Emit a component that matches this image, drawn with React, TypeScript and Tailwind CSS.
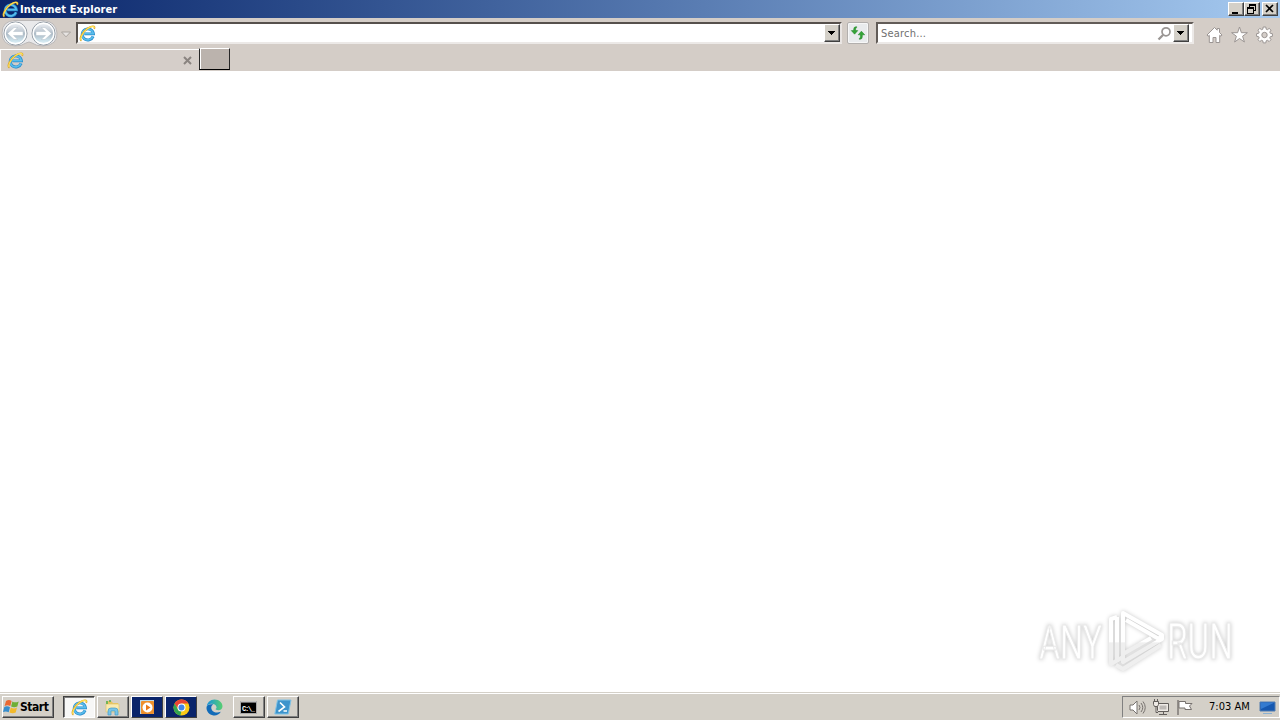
import React from 'react';

const raised = 'border border-t-white border-l-white border-r-[#404040] border-b-[#404040] bg-[#d4d0c8] shadow-[inset_-1px_-1px_0_#808080]';

function IeIcon({ size = 16 }: { size?: number }) {
  return (
    <svg width={size} height={size} viewBox="0 0 16 16" fill="none" className="shrink-0">
      <path d="M13.3 10.7A5.3 5.2 0 1 1 13.6 8.3H5" stroke="#2588c9" strokeWidth="2.7" />
      <path d="M13.2 10.7A5.3 5.2 0 1 1 13.5 8.1H5" stroke="#58bdec" strokeWidth="1.6" />
      <path d="M2.3 14.8C-.4 13.5 2.7 6.9 8 3.3 12 .6 15.8 .2 14.3 3.6" stroke="#d9a52c" strokeWidth="1.6" />
      <path d="M2.1 14.2C.6 13 3.4 6.7 8.2 3.2 12 .6 15 .7 14.2 3" stroke="#ffe052" strokeWidth="1.1" />
    </svg>
  );
}

function NavButtons() {
  return (
    <svg width="58" height="30" viewBox="0 0 58 30" className="shrink-0">
      <defs>
        <linearGradient id="orb" x1="0" y1="0" x2="0" y2="1">
          <stop offset="0" stopColor="#f3f5f8" />
          <stop offset=".3" stopColor="#cfd6de" />
          <stop offset=".52" stopColor="#adbac6" />
          <stop offset=".8" stopColor="#cce2eb" />
          <stop offset="1" stopColor="#effaff" />
        </linearGradient>
      </defs>
      <path d="M15 2.5H43Q56 3 57 15T43 28Q36 28 32 25 29 23 26 25 22 28 15 28 2 27 2 15T15 2.5Z" fill="#e9e9eb" stroke="#bbb8b8" />
      {[15.5, 43.5].map((cx) => (
        <g key={cx}>
          <circle cx={cx} cy="15.5" r="11.5" fill="url(#orb)" stroke="#8c959f" />
          <circle cx={cx} cy="15.5" r="10.3" fill="none" stroke="#fff" strokeWidth="1.4" />
        </g>
      ))}
      <path d="M7.5 15.5 14 9.5H17.8L13.5 13.5H23V17.5H13.5L17.8 21.5H14Z" fill="#fff" stroke="#b5c0cb" strokeWidth=".5" />
      <path d="M51.5 15.5 45 9.5H41.2L45.5 13.5H36V17.5H45.5L41.2 21.5H45Z" fill="#fff" stroke="#b5c0cb" strokeWidth=".5" />
    </svg>
  );
}

function DropButton() {
  return (
    <div className={`flex h-[18px] w-4 shrink-0 items-center justify-center ${raised}`}>
      <svg width="8" height="4" viewBox="0 0 8 4" shapeRendering="crispEdges"><path d="M0 0H7V1H6V2H5V3H4V4H3V3H2V2H1V1H0Z" /></svg>
    </div>
  );
}

function TitleBar() {
  return (
    <div className="flex h-[18px] items-center bg-linear-to-r from-[#0a246a] to-[#a6caf0] pl-0.5 pr-0.5">
      <IeIcon size={17} />
      <span className="mt-px ml-px whitespace-nowrap font-['DejaVu_Sans_Condensed','DejaVu_Sans',sans-serif] text-[11px] leading-[18px] font-bold tracking-[0.08px] text-white [font-stretch:condensed]">Internet Explorer</span>
      <div className="ml-auto flex">
        <div className={`h-[14px] w-4 ${raised}`}>
          <svg width="14" height="12" shapeRendering="crispEdges"><path d="M3 9H9V11H3Z" /></svg>
        </div>
        <div className={`h-[14px] w-4 ${raised}`}>
          <svg width="14" height="12" fill="none" stroke="#000" shapeRendering="crispEdges">
            <path d="M4.5 4V1.5H10.5V7.5H8M4 2.5H11M2.5 4.5H8.5V10.5H2.5ZM2 5.5H9" />
          </svg>
        </div>
        <div className={`ml-0.5 h-[14px] w-4 ${raised}`}>
          <svg width="14" height="12" fill="none" stroke="#000" strokeWidth="1.7"><path d="M3 2 10 9M10 2 3 9" /></svg>
        </div>
      </div>
    </div>
  );
}

function Toolbar() {
  return (
    <div className="flex h-[30px] items-start">
      <NavButtons />
      <svg width="10" height="7" viewBox="0 0 10 7" className="mt-[13px] ml-[3px] shrink-0"><path d="M.5 1H9.5L5 5.8Z" fill="#e7e4e2" stroke="#aaa49f" /></svg>
      <div className="mt-1 ml-[5px] flex h-[22px] w-[766px] items-center border-2 border-t-[#56504c] border-l-[#56504c] border-r-[#e8e4e2] border-b-[#ece9e7] bg-white pl-px">
        <IeIcon size={17} />
        <div className="ml-auto"><DropButton /></div>
      </div>
      <div className="mt-1 ml-[5px] flex h-[22px] w-[22px] items-center justify-center rounded-[2px] border border-[#b2afad] bg-[#e9ebed] shadow-[inset_0_0_0_1px_#f7f7f7]">
        <svg width="16" height="16" viewBox="0 0 16 16" fill="#34a536" stroke="#187f20" strokeWidth=".5">
          <path d="M6.8 1.8H5.7Q3.6 2 3.7 4.2V5.6H1.3L4.6 9.2 7.8 5.6H5.6V4.2Q5.6 2.8 6.8 2.3Z" />
          <path d="M9.2 14.2H10.3Q12.4 14 12.3 11.8V9.8H14.7L11.4 6.2 8.2 9.8H10.4V11.8Q10.4 13.2 9.2 13.7Z" />
        </svg>
      </div>
      <div className="mt-1 ml-[7px] flex h-[22px] w-[318px] items-center border-2 border-t-[#625c58] border-l-[#625c58] border-r-[#ece9e7] border-b-[#ece9e7] bg-white pr-[3px] pl-[3px]">
        <span className="mt-0.5 font-['DejaVu_Sans_Condensed','DejaVu_Sans',sans-serif] text-[11px] tracking-[0.2px] text-[#707070] [font-stretch:condensed]">Search...</span>
        <svg width="15" height="15" viewBox="0 0 15 15" fill="none" stroke="#999593" className="ml-auto mr-px">
          <circle cx="9" cy="5.8" r="4" strokeWidth="1.7" />
          <path d="M6 9 1.5 13.5" strokeWidth="2.3" />
        </svg>
        <DropButton />
      </div>
      <div className="mt-2 ml-3 flex gap-[7.5px]">
        <svg width="17" height="18" viewBox="0 0 17 18" fill="#fff" stroke="#9b9593">
          <path d="M8.5 1.5 1 9 2.1 10.3 3.3 9.3V16.5H7V11.5H10V16.5H13.7V9.3L15 10.3 16 9 13.5 6.5V2.5H11.2V4.2Z" />
        </svg>
        <svg width="17" height="18" viewBox="0 0 17 18" fill="#fff" stroke="#9b9593">
          <path d="M8.5 1 10.4 6.7H16.4L11.6 10.2 13.4 16 8.5 12.5 3.6 16 5.4 10.2.6 6.7H6.6Z" />
        </svg>
        <svg width="17" height="18" viewBox="0 0 17 18" className="ml-[0.5px]">
          <g fill="#fff" stroke="#9b9593">
            <path d="M7.2 1H9.8L10.2 3.2 11.4 3.7 13.2 2.4 15 4.2 13.8 6.1 14.3 7.3 16.4 7.7V10.3L14.3 10.7 13.8 11.9 15 13.7 13.2 15.5 11.4 14.3 10.2 14.8 9.8 16.9H7.2L6.8 14.8 5.6 14.3 3.8 15.5 2 13.7 3.2 11.9 2.7 10.7.6 10.3V7.7L2.7 7.3 3.2 6.1 2 4.2 3.8 2.4 5.6 3.7 6.8 3.2Z" />
            <circle cx="8.5" cy="9" r="2.7" fill="#d4cec9" />
          </g>
        </svg>
      </div>
    </div>
  );
}

function TabBar() {
  return (
    <div className="flex h-[23px] items-start bg-[#d4cdc7]">
      <div className="mt-px flex h-[22px] w-[199px] items-center border-t border-l border-white bg-[#d5cec9] pr-[7px] pb-px pl-[6px]">
        <IeIcon size={17} />
        <svg width="9" height="9" viewBox="0 0 9 9" className="ml-auto" stroke="#8a8480" strokeWidth="2"><path d="M1 1 8 8M8 1 1 8" /></svg>
      </div>
      <div className="h-[22px] w-[31px] border border-t-white border-l-[#262626] border-r-[#262626] border-b-black bg-[#bbb3ad] shadow-[inset_1px_0_0_#fff]" />
    </div>
  );
}

function AnyRunLogo() {
  return (
    <svg width="210" height="72" viewBox="0 0 210 72" className="drop-shadow-[0_0_2px_rgba(0,0,0,0.22)]">
      <defs>
        <linearGradient id="mark" x1="0" y1="0" x2="0" y2="72" gradientUnits="userSpaceOnUse">
          <stop offset=".48" stopColor="#fff" />
          <stop offset=".5" stopColor="#efefef" />
        </linearGradient>
      </defs>
      <g fill="url(#mark)" stroke="url(#mark)" strokeWidth="1.2" fontFamily="Roboto, sans-serif" fontSize="49">
        <text transform="translate(6 52) scale(.66 1)" fill="#fff" stroke="#e9e9e9">ANY</text>
        <text transform="translate(134 52) scale(.68 1)" fill="#fff" stroke="#e9e9e9">RUN</text>
      </g>
      <g fill="none" stroke="url(#mark)" strokeWidth="4" strokeLinejoin="round">
        <path d="M90 47V6L129 28 126 32 93 13" />
        <path d="M129 28V32L90 55V47L118 31" />
        <path d="M84 10 78 12V57L90 50M84 10V55" />
        <path d="M83 58 90 62 128 38" />
      </g>
    </svg>
  );
}

function StartFlag() {
  return (
    <svg width="17" height="16" viewBox="0 0 17 16">
      <path d="M3 2Q6 0 8.6 2L7.3 7Q4.6 5.6 1.6 7Z" fill="#e96832" />
      <path d="M9.4 2.5Q12 4.2 15.7 2.5L14.3 7.6Q11 9 8.1 7.5Z" fill="#6eae36" />
      <path d="M1.3 8Q4.2 6.6 7 8.2L5.7 13.3Q3 11.7 0 13Z" fill="#368dcc" />
      <path d="M7.8 8.6Q11 10.3 14 8.6L12.7 13.6Q9.5 15 6.5 13.5Z" fill="#f2b92b" />
    </svg>
  );
}

function Taskbar() {
  return (
    <div className="flex h-7 items-start border-t border-[#d4d0c8] bg-[#d4d0c8] pt-[3px] pl-0.5 shadow-[inset_0_1px_0_#fff]">
      <div className={`flex h-[22px] w-[52px] items-center ${raised}`}>
        <StartFlag />
        <span className="font-['DejaVu_Sans_Condensed','DejaVu_Sans',sans-serif] text-[12px] font-bold tracking-[-0.45px] text-black [font-stretch:condensed]">Start</span>
      </div>
      <div className="ml-[9px] flex gap-0.5">
        <div className="flex h-[22px] w-8 items-center justify-center border border-t-[#404040] border-l-[#404040] border-r-white border-b-white bg-[#f7f7f6] shadow-[inset_1px_1px_0_#808080]">
          <IeIcon size={17} />
        </div>
        <div className={`flex h-[22px] w-8 items-center justify-center pr-px ${raised}`}>
          <svg width="17" height="17" viewBox="0 0 17 17">
            <path d="M2 2H7L9 4H14V13H2Z" fill="#e9c45e" />
            <path d="M2 5H15V13H2Z" fill="#f9eab0" stroke="#dfc66d" strokeWidth=".7" />
            <path d="M3 2V5M5 2H7" stroke="#4bae58" strokeWidth="1.5" />
            <path d="M4 16V12Q4 9 7 9H11Q14 9 14 12V16H11V12H7V16Z" fill="#76c4e8" stroke="#459bc5" strokeWidth=".7" />
          </svg>
        </div>
        <div className="flex h-[22px] w-8 items-center justify-center border border-t-white border-l-white border-r-[#404040] border-b-[#404040] bg-[#0a246a]">
          <svg width="17" height="17" viewBox="0 0 17 17">
            <rect x="1" y="1" width="14" height="14" fill="#b9daef" />
            <rect x="2" y="2" width="13" height="13" rx="1" fill="#ee902c" />
            <circle cx="8.5" cy="8.5" r="5" fill="#fff" />
            <path d="M7 5.5V11.5L11.5 8.5Z" fill="#e87919" />
          </svg>
        </div>
        <div className="flex h-[22px] w-8 items-center justify-center border border-t-white border-l-white border-r-[#404040] border-b-[#404040] bg-[#0a246a]">
          <svg width="17" height="17" viewBox="0 0 17 17">
            <circle cx="8.5" cy="8.5" r="8" fill="#fbc916" />
            <path d="M8.5 8.5H4L1.6 4.5A8 8 0 0 1 15.4 4.5H8.5Z" fill="#e84335" />
            <path d="M1.6 4.5 6 12 8.5 11.5 7.4 16.4A8 8 0 0 1 1.6 4.5Z" fill="#31a552" />
            <circle cx="8.5" cy="8.5" r="4" fill="#fff" />
            <circle cx="8.5" cy="8.5" r="3" fill="#4285e8" />
          </svg>
        </div>
        <div className="flex h-[22px] w-8 items-center justify-center pr-px">
          <svg width="17" height="17" viewBox="0 0 17 17">
            <defs>
              <linearGradient id="edge">
                <stop stopColor="#1692df" />
                <stop offset="1" stopColor="#58cf70" />
              </linearGradient>
            </defs>
            <path d="M.5 8.5A8 8 0 0 1 8.5.5C13.5.5 16.5 4 16.5 7.3 16.5 10 14.6 11.2 12.5 11.2 10.5 11.2 9.6 10.7 9.6 10 10.3 9.5 10.7 8.9 10.5 8 10.1 5.8 7.9 4.8 5.5 4.8 3 4.8 1 6.5.5 8.5Z" fill="url(#edge)" />
            <path d="M.5 8.5C1.2 5.8 4.2 4.6 7.3 5.6 5 6.6 4.7 9 6 11.2 7.6 13.6 11.5 14.2 14.8 12.8 13 16 9.9 16.8 7.4 16.4 3.2 15.8.3 12.3.5 8.5Z" fill="#126bb8" />
          </svg>
        </div>
        <div className={`flex h-[22px] w-8 items-center justify-center pr-px ${raised}`}>
          <svg width="17" height="15" viewBox="0 0 17 15">
            <rect x=".5" y="1.5" width="16" height="12" fill="#000" stroke="#aaa" />
            <path d="M1 2H16" stroke="#ddd" />
            <text x="2" y="11" fill="#fff" fontFamily="Liberation Mono, monospace" fontSize="7" fontWeight="bold" textLength="13">C:\_</text>
          </svg>
        </div>
        <div className={`flex h-[22px] w-8 items-center justify-center ${raised}`}>
          <svg width="18" height="16" viewBox="0 0 18 16">
            <path d="M3.5 1H17L14.3 15H.8Z" fill="#3d94cc" stroke="#81c3e6" />
            <path d="M6 3.5 10.5 8 4.5 12.5M9.5 12H13" fill="none" stroke="#fff" strokeWidth="1.6" />
          </svg>
        </div>
      </div>
      <div className="ml-auto flex h-[22px] w-[158px] items-center border border-t-[#808080] border-l-[#808080] border-r-white border-b-white pl-[6px]">
        <svg width="17" height="17" viewBox="0 0 17 17" fill="none" stroke="#77726f">
          <path d="M1 6H4L8 2V15L4 11H1Z" fill="#fff" />
          <path d="M10 6Q12 8.5 10 11M12 4Q15.5 8.5 12 13M14 2.5Q18.5 8.5 14 14.5" />
        </svg>
        <svg width="17" height="17" viewBox="0 0 17 17" className="ml-[7px]" fill="#eeeae5" stroke="#625e5b">
          <path d="M4.5 4.5H15.5V12.5H4.5ZM6 15.5H14M10.5 12.5V15.5" />
          <path d="M6.5 6.5H13.5V10.5H6.5Z" fill="#bdb9b5" stroke="none" />
          <path d="M.5 2.5H5.5V5.5L4.5 7.5H1.5L.5 5.5ZM1.5 0V2M4.5 0V2M3 8V13.5H5" />
        </svg>
        <svg width="17" height="17" viewBox="0 0 17 17" className="ml-[6px]" stroke="#77726f">
          <path d="M2 1V16" strokeWidth="1.4" />
          <path d="M3 2.5H9.5V4.5H16L13.5 7 15.5 10.5H9V9H3Z" fill="#fff" />
        </svg>
        <span className="ml-[16px] mt-px whitespace-nowrap font-['DejaVu_Sans_Condensed','DejaVu_Sans',sans-serif] text-[11px] tracking-[0.02px] text-black [font-stretch:condensed]">7:03 AM</span>
        <svg width="17" height="15" viewBox="0 0 17 15" className="ml-auto mr-[3px]">
          <path d="M1 2H16V11H1Z" fill="#1658b0" stroke="#527caf" />
          <path d="M1.5 2.5H15.5L2 9Z" fill="#347bd0" />
          <path d="M4 13.5H13" stroke="#8bb1d1" />
        </svg>
      </div>
    </div>
  );
}

export default function App() {
  return (
    <div className="flex h-[720px] w-[1280px] flex-col overflow-hidden bg-[#d4cdc7]">
      <TitleBar />
      <Toolbar />
      <TabBar />
      <main className="flex flex-1 items-end justify-end bg-white pr-[37px] pb-[13px]">
        <AnyRunLogo />
      </main>
      <Taskbar />
    </div>
  );
}
